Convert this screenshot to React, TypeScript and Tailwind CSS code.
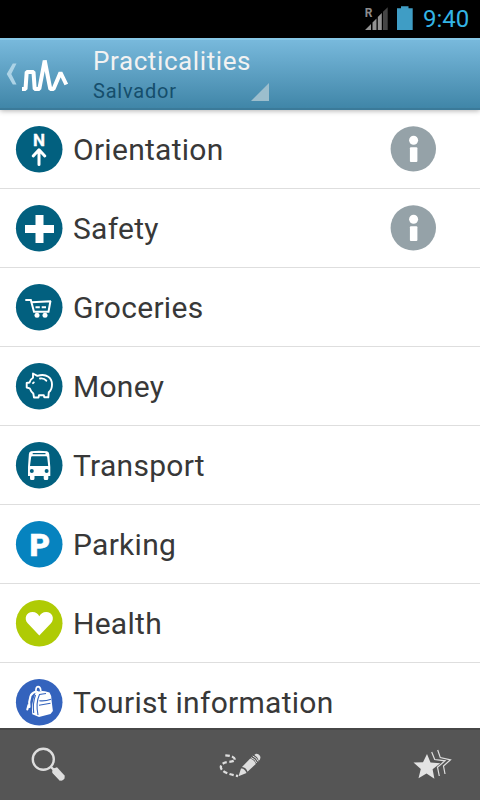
import type { ReactNode } from "react";

type Row = { label: string; color: string; info?: boolean; icon: ReactNode };

const rows: Row[] = [
  {
    label: "Orientation",
    color: "#02607f",
    info: true,
    icon: (
      <>
        <text x="23.900" y="20.500" textAnchor="middle" fontSize="17" fontWeight="700" fill="#fff" stroke="#fff" strokeWidth="0.300" fontFamily="Roboto, sans-serif">N</text>
        <path d="M24 39.500V25.500M18.200 31L24 24.800l5.800 6.200" fill="none" stroke="#fff" strokeWidth="3" strokeLinecap="round" strokeLinejoin="round" />
      </>
    ),
  },
  {
    label: "Safety",
    color: "#02607f",
    info: true,
    icon: <path d="M20.500 11h8v10H39v8H28.500v10h-8V29H10v-8h10.500z" fill="#fff" />,
  },
  {
    label: "Groceries",
    color: "#02607f",
    icon: (
      <g fill="none" stroke="#fff" strokeWidth="2">
        <path d="M10.300 17H15.800L19 28.800H33.500L35.500 17.800M16.500 19.300L36 18.300" />
        <path d="M20.500 24.300h4.300M26.700 24.300h4.300" />
        <circle cx="22" cy="32.300" r="2.500" fill="#fff" stroke="none" />
        <circle cx="30" cy="32.300" r="2.500" fill="#fff" stroke="none" />
      </g>
    ),
  },
  {
    label: "Money",
    color: "#02607f",
    icon: (
      <g fill="none" stroke="#fff" strokeWidth="1.900" strokeLinejoin="round" strokeLinecap="round">
        <path d="M18 11.500L22.300 13.800C32 11 37 16 37 22.500C37 26 36 28.500 33.800 30.300L33.300 35.300H29.300L28.800 33.300H24L23.500 35.500H19L18.300 31.500C16.500 30 15.500 28.500 14.700 26.300L11.700 25.500V21L14.500 20.500C15 18.500 16 17 18 15.800Z" />
        <path d="M25 16.500C28 16 30 17 31.300 18.700M18 21.200l.8-.8" />
      </g>
    ),
  },
  {
    label: "Transport",
    color: "#02607f",
    icon: (
      <>
        <path d="M16 10.300Q24 9 32 10.300Q34 10.700 34.200 13L35.300 26V35H33.300V37.500Q33.300 39 31.800 39H30.200Q28.700 39 28.700 37.500V35H19.500V37.500Q19.500 39 18 39H16.500Q15 39 15 37.500V35H13V26L13.900 13Q14 10.700 16 10.300Z" fill="#fff" />
        <path d="M17.700 11.900h12.800v1.300H17.700zM17.300 15.200h13.800q1 0 1.100 1l1 8.800H15l1.100-8.800q.1-1 1.200-1z" fill="#02607f" />
        <circle cx="16.800" cy="30" r="2" fill="#02607f" />
        <circle cx="31.600" cy="30" r="2" fill="#02607f" />
      </>
    ),
  },
  {
    label: "Parking",
    color: "#0683bf",
    icon: <text x="14.600" y="36" fontSize="31.500" fontWeight="900" fill="#fff" stroke="#fff" strokeWidth="0.500" fontFamily="Roboto, sans-serif">P</text>,
  },
  {
    label: "Health",
    color: "#afcb05",
    icon: <path d="M24.300 36.500L12.700 24.300C8.500 19.500 11.500 13 17.500 13C21 13 23 15 24.300 17.200C25.700 15 27.800 13 31.200 13C37 13 40.200 19.500 36 24.300Z" fill="#fff" />,
  },
  {
    label: "Tourist information",
    color: "#3463bd",
    icon: (
      <>
        <path d="M21 14Q20.500 9 23 8.700Q25.500 8.700 25.800 13" fill="none" stroke="#fff" strokeWidth="1.700" />
        <path d="M20.500 15Q24 12.400 30 13.300L34.500 14.500Q36.500 17 36.500 22L37.900 33L35.500 36L24 39L17.300 36.300Q15.700 27 20.500 15Z" fill="#fff" />
        <path d="M16 17Q19 13 22.500 14M15.500 18Q13.500 24 14.500 29M13.500 27L12.300 31.500" fill="none" stroke="#fff" strokeWidth="2.100" strokeLinecap="round" />
        <path d="M20.500 17Q17.500 25 18.700 35M23 37Q20.500 25 24.500 16.500L31 15.500M24.300 22.700Q30 23.500 36 21.200M24 27.200L35.500 25.200" fill="none" stroke="#3463bd" strokeWidth="1.100" />
      </>
    ),
  },
];

function InfoButton() {
  return (
    <svg className="mr-[43px] ml-auto size-12 shrink-0" viewBox="0 0 48 48">
      <circle cx="24.300" cy="23.900" r="22.700" fill="#95a2a8" />
      <circle cx="24.600" cy="15.300" r="4.500" fill="#fff" />
      <rect x="20.900" y="22.300" width="7.500" height="14.700" rx="1" fill="#fff" />
    </svg>
  );
}

function StatusBar() {
  return (
    <div className="flex h-[38px] shrink-0 items-center justify-end bg-black">
      <svg className="h-[38px] w-[60px]" viewBox="360 0 60 38">
        <path d="M365 30L371 24V30Z M372.500 22.500L376.500 18.500V30H372.500Z M377.800 17L381.800 13V30H377.800Z" fill="#929292" />
        <path d="M383 11.800L387.700 7.200V30H383Z" fill="#454545" />
        <text x="364.800" y="17" fontSize="12" fontWeight="700" fill="#8c8c8c" fontFamily="Roboto, sans-serif">R</text>
        <path d="M401 6.300h7.500v2h4.200V30H397V8.300h4z" fill="#3f9dc5" />
      </svg>
      <span className="w-[60px] pl-[3px] text-[24px] leading-[40px] text-[#33b5e5]">9:40</span>
    </div>
  );
}

function Header() {
  return (
    <header className="z-10 flex h-[72px] shrink-0 border-t-2 border-b-2 border-t-[#87c7e6] border-b-[#3b7a99] bg-linear-to-b from-[#78b9dc] to-[#4086a8] shadow-[0_1px_5px_rgba(0,0,0,0.3)]">
      <svg className="h-[68px] w-[93px] shrink-0" viewBox="0 40 93 68">
        <path d="M12.800 63.500H16.500L11.300 74L16.500 84.500H12.800L6.700 74Z" fill="#add3e6" />
        <path d="M22 89H25.500L26.700 72H33.500L34.700 89H39.300L44.700 60.500L50.300 89H53.500L60.500 72.500L66.300 84.500" fill="none" stroke="#fff" strokeWidth="4" strokeLinejoin="bevel" />
      </svg>
      <div className="flex w-[158px] flex-col whitespace-nowrap">
        <h1 className="mt-[5px] text-[26px] leading-[32px] tracking-[0.6px] text-[#f2f2f2]">Practicalities</h1>
        <p className="text-[20px] leading-[28px] tracking-[0.8px] text-[#154e6c]">Salvador</p>
      </div>
      <svg className="mt-[43px] size-[18px]" viewBox="0 0 18 18">
        <path d="M18 0V18H0Z" fill="#9cbecd" />
      </svg>
    </header>
  );
}

function BottomBar() {
  return (
    <nav className="flex h-[72px] shrink-0 items-center justify-between border-t-2 border-[#474747] bg-[#555555]">
      <svg className="h-[70px] w-20" viewBox="0 730 80 70">
        <circle cx="43.300" cy="759.300" r="10.500" fill="none" stroke="#dedede" strokeWidth="2.400" />
        <path d="M51 767L55 771" stroke="#dedede" strokeWidth="2.400" />
        <path d="M55.500 771.500L61.500 777.500" stroke="#dedede" strokeWidth="6" strokeLinecap="round" />
        <path d="M52.800 768.800L57 767.300L65 776L60 781L52.500 773Z" fill="#dedede" />
      </svg>
      <svg className="h-[70px] w-20" viewBox="200 730 80 70">
        <path d="M225.300 755.300Q235 756 235 760Q234 761.500 228 762Q221 763 220.800 767Q221 773 238 776" fill="none" stroke="#dedede" strokeWidth="2.300" strokeDasharray="4.500 2.200" />
        <path d="M238.500 776.300L241 768.500Q244.500 768 246.500 773Z M242 767L250.200 758.500Q254.800 760 255.800 764L247.500 771.800Q246.500 767.500 242 767Z M254.200 755L256 753.700Q259 753.500 260.500 757L260 759.500L258.700 761Q258 757 254.200 755Z" fill="#dedede" />
        <path d="M251 757.600Q255.600 759 256.600 763M252.700 756Q257 757.700 258 761.500" fill="none" stroke="#dedede" strokeWidth="1" />
      </svg>
      <svg className="h-[70px] w-20" viewBox="400 730 80 70">
        <path d="M427 754L430.500 762.600L440.300 763.200L432.600 769.300L434.400 778.800L426.500 773.500L418.500 778.300L420.800 769L413.500 762.500L423 762.200Z" fill="#e3e3e3" />
        <path d="M431.700 752L434.700 759.500L445 760.800L437.500 767.200L439.300 776M437.700 750L440.300 757.600L450.500 759.800L443.500 766L445 774" fill="none" stroke="#dedede" strokeWidth="1.200" />
      </svg>
    </nav>
  );
}

export default function App() {
  return (
    <div className="flex h-[800px] w-[480px] flex-col overflow-hidden bg-white font-[Roboto,sans-serif]">
      <StatusBar />
      <Header />
      <main className="min-h-0 flex-1 overflow-hidden">
        {rows.map((row) => (
          <div key={row.label} className="flex h-[79px] items-center border-b border-[#dedede] pl-[15px]">
            <svg className="size-12 shrink-0" viewBox="0 0 48 48">
              <circle cx="24.200" cy="24.200" r="23.300" fill={row.color} />
              {row.icon}
            </svg>
            <span className="ml-[10px] pt-[2px] text-[30px] leading-[40px] tracking-[0.28px] whitespace-nowrap text-[#383838]">{row.label}</span>
            {row.info && <InfoButton />}
          </div>
        ))}
      </main>
      <BottomBar />
    </div>
  );
}
